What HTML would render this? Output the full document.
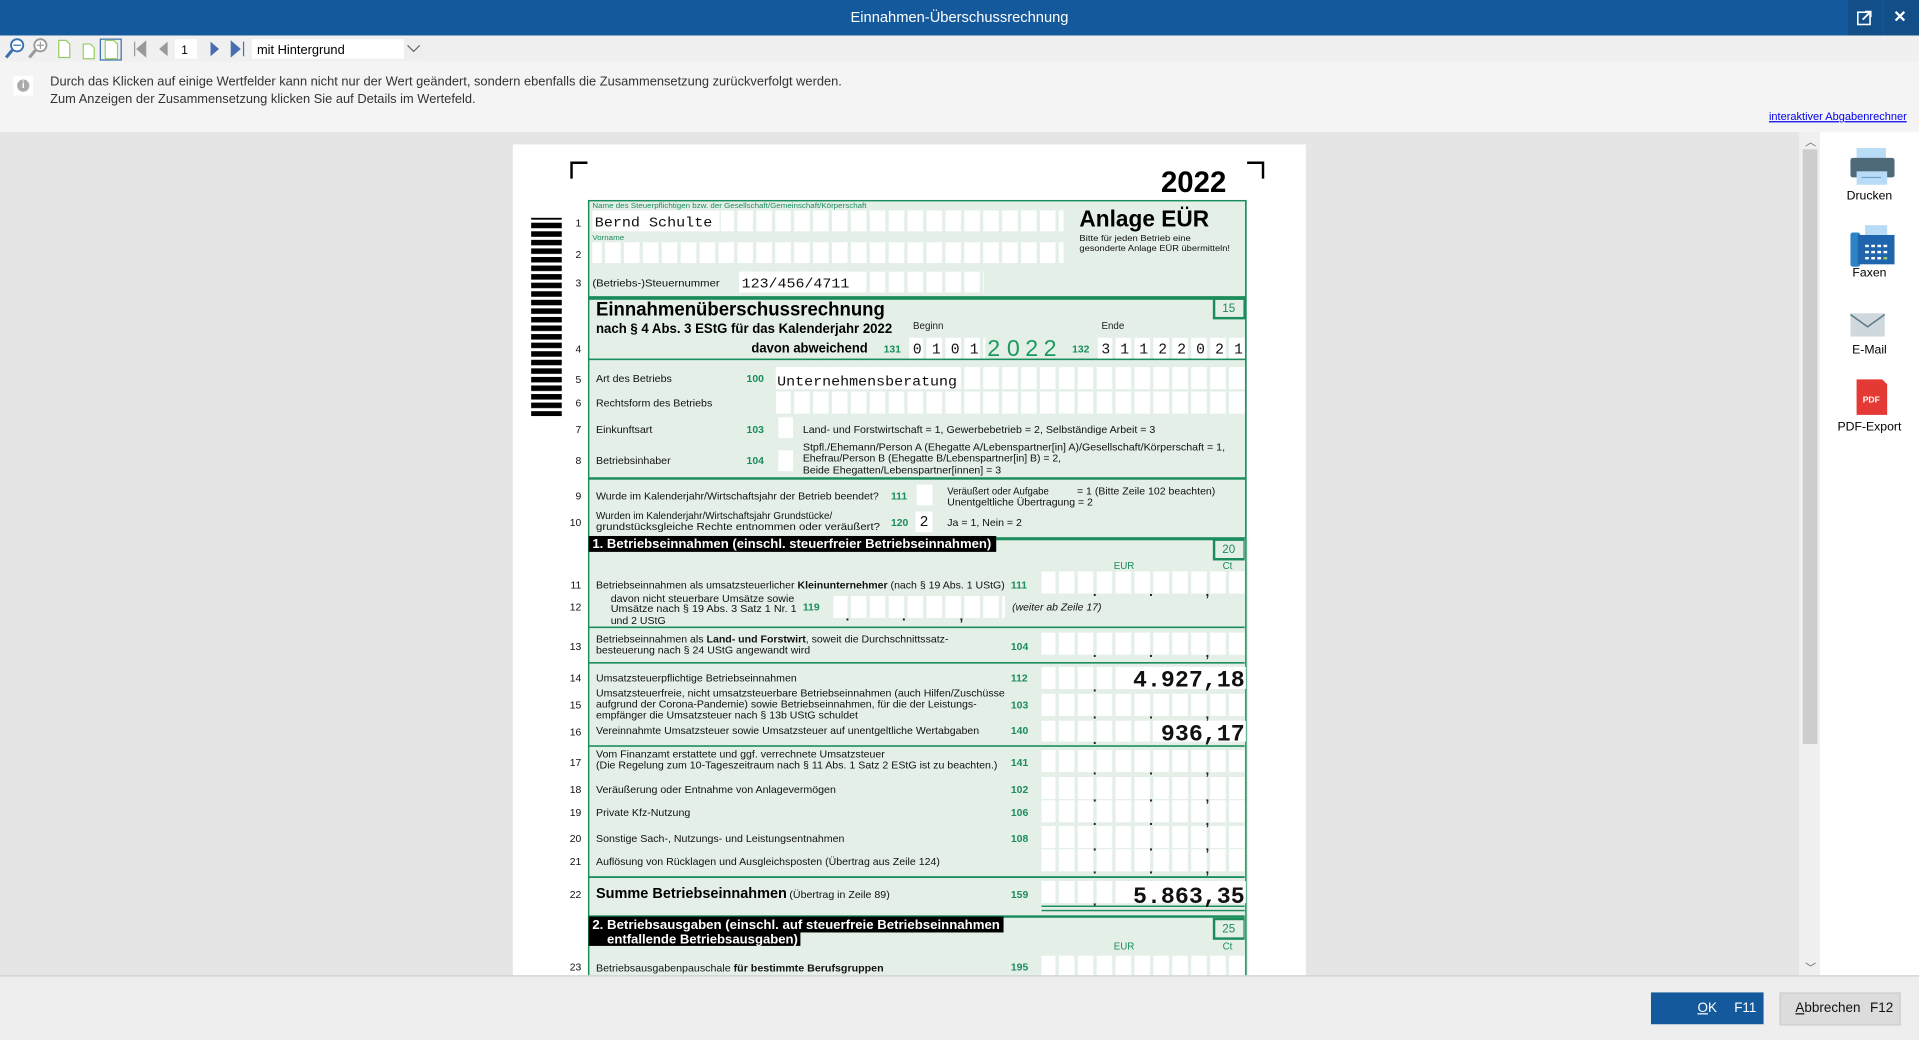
<!DOCTYPE html>
<html><head><meta charset="utf-8"><style>
html,body{margin:0;padding:0;width:1919px;height:1040px;overflow:hidden;background:#eee}
#w{position:absolute;left:0;top:0;width:1568px;height:850px;transform:scale(1.22385,1.2237);transform-origin:0 0;font-family:"Liberation Sans",sans-serif;overflow:hidden;background:#e5e5e5}
.a{position:absolute}
</style></head><body><div id="w">
<div class="a" style="left:0;top:0;width:1568px;height:29px;background:#14599b;color:#fff;font-size:12px;text-align:center;line-height:29px">Einnahmen-Überschussrechnung</div>
<div class="a" style="left:1510px;top:0;width:28px;height:29px;background:#124f89"></div>
<div class="a" style="left:1539px;top:0;width:29px;height:29px;background:#124f89"></div>
<svg class="a" style="left:1517px;top:8px" width="13" height="13"><rect x="1" y="2" width="10" height="10" fill="none" stroke="#fff" stroke-width="1.3"/><path d="M5 8 L11 2 M7 1.5 H11.5 V6" stroke="#fff" stroke-width="1.5" fill="none"/></svg>
<div class="a" style="left:1547px;top:6px;color:#fff;font-size:13px;font-weight:bold">✕</div>
<div class="a" style="left:0;top:29px;width:1568px;height:21px;background:#f0f0f0"></div>
<svg class="a" style="left:0;top:29px" width="350" height="21">
<circle cx="14" cy="8" r="5" fill="#fff" stroke="#3a6fb0" stroke-width="1.5"/><path d="M11 8h6" stroke="#3a6fb0"/><path d="M10 12 L5 18" stroke="#3a6fb0" stroke-width="2.5"/>
<circle cx="33" cy="8" r="5" fill="#fff" stroke="#999" stroke-width="1.5"/><path d="M30 8h6M33 5v6" stroke="#999"/><path d="M29 12 L24 18" stroke="#999" stroke-width="2.5"/>
<path d="M48 4h6l3 3v11h-9z" fill="#fff" stroke="#9c6"/><path d="M68 7h6l3 3v9h-9z" fill="#fff" stroke="#9c6"/>
<rect x="82" y="3" width="17" height="17" fill="none" stroke="#3a6fb0"/><path d="M86 4h7l3 3v12h-10z" fill="#fff" stroke="#9c6"/>
<path d="M110 5v12M119 5l-7 6 7 6z" stroke="#999" fill="#999"/><path d="M137 5l-7 6 7 6z" fill="#999"/>
<rect x="143" y="3" width="18" height="16" fill="#fff"/><text x="148" y="15" font-size="10" font-family="Liberation Sans">1</text>
<path d="M172 5l7 6-7 6z" fill="#4a6fb0"/><path d="M189 5l7 6-7 6z M199 5v12" fill="#4a6fb0" stroke="#4a6fb0"/>
<rect x="206" y="3" width="140" height="16" fill="#fff"/><rect x="330" y="3" width="16" height="16" fill="#eee"/><path d="M333 8l5 5 5-5" stroke="#666" fill="none"/>
<text x="210" y="15" font-size="10.5" font-family="Liberation Sans">mit Hintergrund</text></svg>
<div class="a" style="left:0;top:50px;width:1568px;height:58px;background:#f4f4f4"></div>
<div class="a" style="left:11px;top:62px;width:16px;height:16px;background:#fff"></div>
<div class="a" style="left:14px;top:65px;width:10px;height:10px;border-radius:5px;background:#aaa;color:#fff;font-size:8px;text-align:center;line-height:10px;font-weight:bold">i</div>
<div class="a" style="left:41px;top:60px;font-size:10.5px;color:#333;line-height:14px">Durch das Klicken auf einige Wertfelder kann nicht nur der Wert geändert, sondern ebenfalls die Zusammensetzung zurückverfolgt werden.<br>Zum Anzeigen der Zusammensetzung klicken Sie auf Details im Wertefeld.</div>
<div class="a" style="right:10px;top:90px;font-size:9px;color:#00e;text-decoration:underline">interaktiver Abgabenrechner</div>
<div class="a" style="left:1470px;top:108px;width:17px;height:690px;background:#f0f0f0"></div>
<div class="a" style="left:1473px;top:122px;width:12px;height:486px;background:#cdcdcd"></div>
<div class="a" style="left:1475px;top:109px;font-size:9px;color:#666">︿</div>
<div class="a" style="left:1475px;top:784px;font-size:9px;color:#666">﹀</div>
<div class="a" style="left:1487px;top:108px;width:81px;height:690px;background:#fff;font-size:10px;text-align:center"></div>
<svg class="a" style="left:1487px;top:108px" width="81" height="260">
<rect x="30" y="13" width="24" height="10" fill="#b8dcf5"/><rect x="25" y="21" width="36" height="16" rx="2" fill="#4e6978"/><rect x="30" y="32" width="25" height="11" fill="#b8dcf5"/><path d="M34 37h16" stroke="#6aa0cc"/>
<rect x="25" y="82" width="8" height="28" rx="2" fill="#2c84c6"/><rect x="31" y="84" width="30" height="24" fill="#1f65ad"/><rect x="37" y="76" width="18" height="8" fill="#b8dcf5"/>
<g fill="#fff"><rect x="37" y="92" width="3" height="2"/><rect x="42" y="92" width="3" height="2"/><rect x="47" y="92" width="3" height="2"/><rect x="52" y="92" width="3" height="2"/><rect x="37" y="97" width="3" height="2"/><rect x="42" y="97" width="3" height="2"/><rect x="47" y="97" width="3" height="2"/><rect x="52" y="97" width="3" height="2"/><rect x="37" y="102" width="3" height="2"/><rect x="42" y="102" width="3" height="2"/><rect x="47" y="102" width="3" height="2"/><rect x="52" y="102" width="3" height="2" fill="#9c6"/></g>
<rect x="25" y="148" width="28" height="19" fill="#cfd8dc"/><path d="M25 149 L39 159 L53 149" stroke="#607d8b" stroke-width="1.3" fill="none"/>
<path d="M30 202h21l4 4v25h-25z" fill="#e53935"/><text x="42" y="221" font-size="7" font-weight="bold" fill="#fff" text-anchor="middle" font-family="Liberation Sans">PDF</text>
</svg>
<div class="a" style="left:1487px;top:155px;width:81px;text-align:center;font-size:10px">Drucken</div>
<div class="a" style="left:1487px;top:218px;width:81px;text-align:center;font-size:10px">Faxen</div>
<div class="a" style="left:1487px;top:281px;width:81px;text-align:center;font-size:10px">E-Mail</div>
<div class="a" style="left:1487px;top:344px;width:81px;text-align:center;font-size:10px">PDF-Export</div>
<div class="a" style="left:419px;top:118px;width:648px;height:690px;background:#fff"></div>
<svg class="a" style="left:0;top:0" width="1568" height="850" font-family="Liberation Sans, sans-serif">
<defs>
<pattern id="c" patternUnits="userSpaceOnUse" width="15.45" height="100"><rect width="12.7" height="100" fill="#fff"/></pattern>
<pattern id="bc" patternUnits="userSpaceOnUse" width="26" height="7"><rect width="26" height="4.5" fill="#000"/></pattern>
</defs>
<path d="M467 146V133H480 M1019 133H1032V146" stroke="#000" stroke-width="2" fill="none"/>
<text x="1002" y="157" font-size="24" font-weight="bold" text-anchor="end">2022</text>
<rect x="434" y="178" width="25" height="162" fill="url(#bc)"/>
<rect x="481" y="164" width="537" height="640" fill="#e4efe8" stroke="#1b8c5c" stroke-width="1.2"/>
<g fill="#1b8c5c"><rect x="481" y="242" width="537" height="3"/><rect x="481" y="293" width="537" height="1.3"/><rect x="481" y="390" width="537" height="2"/><rect x="481" y="439" width="537" height="2.5"/><rect x="481" y="512" width="537" height="1.3"/><rect x="481" y="541" width="537" height="1.3"/><rect x="481" y="609" width="537" height="1.3"/><rect x="481" y="716" width="537" height="1.5"/><rect x="481" y="748" width="537" height="2"/><rect x="851" y="740" width="167" height="1.2"/><rect x="851" y="743.5" width="167" height="1.2"/></g>
<g fill="none" stroke="#1b8c5c" stroke-width="2"><rect x="992" y="244" width="25" height="16"/><rect x="992" y="441" width="25" height="16"/><rect x="992" y="751" width="25" height="16"/></g>
<g fill="#1b8c5c" font-size="9.5" text-anchor="middle"><text x="1004" y="255">15</text><text x="1004" y="452">20</text><text x="1004" y="762">25</text></g>
<rect x="484" y="172" width="104" height="17" fill="#fff"/><rect x="589" y="172" width="280" height="17" fill="url(#c)"/>
<rect x="484" y="198" width="385" height="17" fill="url(#c)"/><rect x="604" y="222" width="200" height="17" fill="url(#c)"/><rect x="604" y="222" width="93" height="17" fill="#fff"/>
<rect x="743" y="276" width="62" height="17" fill="url(#c)"/><rect x="897" y="276" width="124" height="17" fill="url(#c)"/>
<rect x="634" y="300" width="385" height="18" fill="url(#c)"/><rect x="634" y="300" width="150" height="18" fill="#fff"/><rect x="634" y="320" width="385" height="18" fill="url(#c)"/>
<g fill="#fff"><rect x="636" y="341" width="12" height="17"/><rect x="636" y="368" width="12" height="17"/><rect x="749" y="396" width="13" height="17"/><rect x="748" y="418" width="14" height="17"/></g>
<rect x="681" y="487" width="140" height="18" fill="url(#c)"/>
<g fill="url(#c)"><rect x="851" y="467" width="170" height="18"/><rect x="851" y="517" width="170" height="18"/><rect x="851" y="545" width="170" height="18"/><rect x="851" y="567" width="170" height="18"/><rect x="851" y="589" width="170" height="17"/><rect x="851" y="613" width="170" height="18"/><rect x="851" y="635" width="170" height="18"/><rect x="851" y="654" width="170" height="18"/><rect x="851" y="675" width="170" height="18"/><rect x="851" y="694" width="170" height="18"/><rect x="851" y="720" width="170" height="18"/><rect x="851" y="781" width="170" height="18"/></g>
<rect x="1017" y="440" width="3" height="370" fill="#e4efe8"/><rect x="1017.4" y="164" width="1.2" height="640" fill="#1b8c5c"/>
<rect x="912" y="545" width="106" height="18" fill="#fff"/><rect x="942" y="589" width="76" height="17" fill="#fff"/><rect x="912" y="720" width="106" height="18" fill="#fff"/>
<g font-size="11" fill="#222" font-weight="bold"><text x="893" y="487">.</text><text x="939" y="487">.</text><text x="985" y="487">,</text><text x="893" y="537">.</text><text x="939" y="537">.</text><text x="985" y="537">,</text><text x="893" y="565">.</text><text x="893" y="587">.</text><text x="939" y="587">.</text><text x="985" y="587">,</text><text x="893" y="608">.</text><text x="893" y="633">.</text><text x="939" y="633">.</text><text x="985" y="633">,</text><text x="893" y="655">.</text><text x="939" y="655">.</text><text x="985" y="655">,</text><text x="893" y="674">.</text><text x="939" y="674">.</text><text x="985" y="674">,</text><text x="893" y="695">.</text><text x="939" y="695">.</text><text x="985" y="695">,</text><text x="893" y="714">.</text><text x="939" y="714">.</text><text x="985" y="714">,</text><text x="893" y="740">.</text><text x="893" y="800">.</text><text x="939" y="800">.</text><text x="691" y="507">.</text><text x="737" y="507">.</text><text x="784" y="507">,</text></g>
<g font-size="8.5" fill="#111" text-anchor="end"><text x="475" y="185">1</text><text x="475" y="211">2</text><text x="475" y="234">3</text><text x="475" y="288">4</text><text x="475" y="313">5</text><text x="475" y="332">6</text><text x="475" y="354">7</text><text x="475" y="379">8</text><text x="475" y="408">9</text><text x="475" y="430">10</text><text x="475" y="481">11</text><text x="475" y="499">12</text><text x="475" y="531">13</text><text x="475" y="557">14</text><text x="475" y="579">15</text><text x="475" y="601">16</text><text x="475" y="626">17</text><text x="475" y="648">18</text><text x="475" y="667">19</text><text x="475" y="688">20</text><text x="475" y="707">21</text><text x="475" y="734">22</text><text x="475" y="793">23</text></g>
<g fill="#1b8c5c" font-size="6"><text x="484" y="170" textLength="224" lengthAdjust="spacingAndGlyphs">Name des Steuerpflichtigen bzw. der Gesellschaft/Gemeinschaft/Körperschaft</text><text x="484" y="196" textLength="26" lengthAdjust="spacingAndGlyphs">Vorname</text></g>
<g font-family="Liberation Mono, monospace" font-size="11.5" fill="#111"><text x="486" y="185" textLength="96" lengthAdjust="spacingAndGlyphs">Bernd Schulte</text><text x="606" y="235" textLength="88" lengthAdjust="spacingAndGlyphs">123/456/4711</text><text x="635" y="315" textLength="147" lengthAdjust="spacingAndGlyphs">Unternehmensberatung</text></g>
<g font-family="Liberation Mono, monospace" font-size="12" fill="#111" text-anchor="middle"><text x="749.5" y="289">0</text><text x="765" y="289">1</text><text x="780.5" y="289">0</text><text x="796" y="289">1</text><text x="903.5" y="289">3</text><text x="919" y="289">1</text><text x="934.5" y="289">1</text><text x="950" y="289">2</text><text x="965.5" y="289">2</text><text x="981" y="289">0</text><text x="996.5" y="289">2</text><text x="1012" y="289">1</text><text x="755" y="430">2</text></g>
<g font-size="19" fill="#1b9a5c" text-anchor="middle"><text x="812" y="291">2</text><text x="828" y="291">0</text><text x="843" y="291">2</text><text x="858" y="291">2</text></g>
<g font-family="Liberation Mono, monospace" font-size="19" font-weight="bold" fill="#111" text-anchor="end"><text x="1017" y="561">4.927,18</text><text x="1017" y="605">936,17</text><text x="1017" y="738">5.863,35</text></g>
<text x="882" y="185" font-size="19" font-weight="bold" textLength="106" lengthAdjust="spacingAndGlyphs">Anlage EÜR</text>
<g font-size="7" fill="#111"><text x="882" y="197" textLength="91" lengthAdjust="spacingAndGlyphs">Bitte für jeden Betrieb eine</text><text x="882" y="205" textLength="123" lengthAdjust="spacingAndGlyphs">gesonderte Anlage EÜR übermitteln!</text></g>
<text x="487" y="258" font-size="16" font-weight="bold" textLength="236" lengthAdjust="spacingAndGlyphs">Einnahmenüberschussrechnung</text>
<text x="487" y="272" font-size="11" font-weight="bold" textLength="242" lengthAdjust="spacingAndGlyphs">nach § 4 Abs. 3 EStG für das Kalenderjahr 2022</text>
<text x="614" y="288" font-size="11" font-weight="bold" textLength="95" lengthAdjust="spacingAndGlyphs">davon abweichend</text>
<g font-size="8" fill="#222"><text x="746" y="269">Beginn</text><text x="900" y="269">Ende</text></g>
<g fill="#1b8c5c" font-size="8.5" font-weight="bold"><text x="722" y="288">131</text><text x="876" y="288">132</text><text x="610" y="312">100</text><text x="610" y="354">103</text><text x="610" y="379">104</text><text x="728" y="408">111</text><text x="728" y="430">120</text><text x="826" y="481">111</text><text x="656" y="499">119</text><text x="826" y="531">104</text><text x="826" y="557">112</text><text x="826" y="579">103</text><text x="826" y="600">140</text><text x="826" y="626">141</text><text x="826" y="648">102</text><text x="826" y="667">106</text><text x="826" y="688">108</text><text x="826" y="734">159</text><text x="826" y="793">195</text></g>
<g fill="#1b8c5c" font-size="8"><text x="910" y="465">EUR</text><text x="999" y="465">Ct</text><text x="910" y="776">EUR</text><text x="999" y="776">Ct</text></g>
<g font-size="8.6" fill="#111">
<text x="484" y="234" textLength="104" lengthAdjust="spacingAndGlyphs">(Betriebs-)Steuernummer</text>
<text x="487" y="312" textLength="62" lengthAdjust="spacingAndGlyphs">Art des Betriebs</text>
<text x="487" y="332" textLength="95" lengthAdjust="spacingAndGlyphs">Rechtsform des Betriebs</text>
<text x="487" y="354" textLength="46" lengthAdjust="spacingAndGlyphs">Einkunftsart</text>
<text x="656" y="354" textLength="288" lengthAdjust="spacingAndGlyphs">Land- und Forstwirtschaft = 1, Gewerbebetrieb = 2, Selbständige Arbeit = 3</text>
<text x="487" y="379" textLength="61" lengthAdjust="spacingAndGlyphs">Betriebsinhaber</text>
<text x="656" y="368" textLength="345" lengthAdjust="spacingAndGlyphs">Stpfl./Ehemann/Person A (Ehegatte A/Lebenspartner[in] A)/Gesellschaft/Körperschaft = 1,</text>
<text x="656" y="377" textLength="211" lengthAdjust="spacingAndGlyphs">Ehefrau/Person B (Ehegatte B/Lebenspartner[in] B) = 2,</text>
<text x="656" y="387" textLength="162" lengthAdjust="spacingAndGlyphs">Beide Ehegatten/Lebenspartner[innen] = 3</text>
<text x="487" y="408" textLength="231" lengthAdjust="spacingAndGlyphs">Wurde im Kalenderjahr/Wirtschaftsjahr der Betrieb beendet?</text>
<text x="774" y="404" textLength="83" lengthAdjust="spacingAndGlyphs">Veräußert oder Aufgabe</text>
<text x="880" y="404" textLength="113" lengthAdjust="spacingAndGlyphs">= 1 (Bitte Zeile 102 beachten)</text>
<text x="774" y="413" textLength="119" lengthAdjust="spacingAndGlyphs">Unentgeltliche Übertragung = 2</text>
<text x="487" y="424" textLength="193" lengthAdjust="spacingAndGlyphs">Wurden im Kalenderjahr/Wirtschaftsjahr Grundstücke/</text>
<text x="487" y="433" textLength="232" lengthAdjust="spacingAndGlyphs">grundstücksgleiche Rechte entnommen oder veräußert?</text>
<text x="774" y="430" textLength="61" lengthAdjust="spacingAndGlyphs">Ja = 1, Nein = 2</text>
<text x="487" y="481" textLength="334" lengthAdjust="spacingAndGlyphs">Betriebseinnahmen als umsatzsteuerlicher <tspan font-weight="bold">Kleinunternehmer</tspan> (nach § 19 Abs. 1 UStG)</text>
<text x="499" y="492" textLength="150" lengthAdjust="spacingAndGlyphs">davon nicht steuerbare Umsätze sowie</text>
<text x="499" y="500" textLength="152" lengthAdjust="spacingAndGlyphs">Umsätze nach § 19 Abs. 3 Satz 1 Nr. 1</text>
<text x="499" y="510">und 2 UStG</text>
<text x="827" y="499" font-style="italic" textLength="73" lengthAdjust="spacingAndGlyphs">(weiter ab Zeile 17)</text>
<text x="487" y="525" textLength="288" lengthAdjust="spacingAndGlyphs">Betriebseinnahmen als <tspan font-weight="bold">Land- und Forstwirt</tspan>, soweit die Durchschnittssatz-</text>
<text x="487" y="534" textLength="175" lengthAdjust="spacingAndGlyphs">besteuerung nach § 24 UStG angewandt wird</text>
<text x="487" y="557" textLength="164" lengthAdjust="spacingAndGlyphs">Umsatzsteuerpflichtige Betriebseinnahmen</text>
<text x="487" y="569" textLength="334" lengthAdjust="spacingAndGlyphs">Umsatzsteuerfreie, nicht umsatzsteuerbare Betriebseinnahmen (auch Hilfen/Zuschüsse</text>
<text x="487" y="578" textLength="311" lengthAdjust="spacingAndGlyphs">aufgrund der Corona-Pandemie) sowie Betriebseinnahmen, für die der Leistungs-</text>
<text x="487" y="587" textLength="214" lengthAdjust="spacingAndGlyphs">empfänger die Umsatzsteuer nach § 13b UStG schuldet</text>
<text x="487" y="600" textLength="313" lengthAdjust="spacingAndGlyphs">Vereinnahmte Umsatzsteuer sowie Umsatzsteuer auf unentgeltliche Wertabgaben</text>
<text x="487" y="619" textLength="236" lengthAdjust="spacingAndGlyphs">Vom Finanzamt erstattete und ggf. verrechnete Umsatzsteuer</text>
<text x="487" y="628" textLength="328" lengthAdjust="spacingAndGlyphs">(Die Regelung zum 10-Tageszeitraum nach § 11 Abs. 1 Satz 2 EStG ist zu beachten.)</text>
<text x="487" y="648" textLength="196" lengthAdjust="spacingAndGlyphs">Veräußerung oder Entnahme von Anlagevermögen</text>
<text x="487" y="667" textLength="77" lengthAdjust="spacingAndGlyphs">Private Kfz-Nutzung</text>
<text x="487" y="688" textLength="203" lengthAdjust="spacingAndGlyphs">Sonstige Sach-, Nutzungs- und Leistungsentnahmen</text>
<text x="487" y="707" textLength="281" lengthAdjust="spacingAndGlyphs">Auflösung von Rücklagen und Ausgleichsposten (Übertrag aus Zeile 124)</text>
<text x="645" y="734" textLength="82" lengthAdjust="spacingAndGlyphs">(Übertrag in Zeile 89)</text>
<text x="487" y="794" textLength="235" lengthAdjust="spacingAndGlyphs">Betriebsausgabenpauschale <tspan font-weight="bold">für bestimmte Berufsgruppen</tspan></text>
</g>
<text x="487" y="734" font-size="12" font-weight="bold" textLength="156" lengthAdjust="spacingAndGlyphs">Summe Betriebseinnahmen</text>
<rect x="481" y="438" width="333" height="13" fill="#000"/>
<text x="484" y="448" font-size="10.5" font-weight="bold" fill="#fff" textLength="326" lengthAdjust="spacingAndGlyphs">1. Betriebseinnahmen (einschl. steuerfreier Betriebseinnahmen)</text>
<rect x="481" y="749" width="339" height="13" fill="#000"/><rect x="481" y="761" width="173" height="12" fill="#000"/>
<text x="484" y="759" font-size="10.5" font-weight="bold" fill="#fff" textLength="333" lengthAdjust="spacingAndGlyphs">2. Betriebsausgaben (einschl. auf steuerfreie Betriebseinnahmen</text>
<text x="496" y="771" font-size="10.5" font-weight="bold" fill="#fff" textLength="156" lengthAdjust="spacingAndGlyphs">entfallende Betriebsausgaben)</text>
</svg>
<div class="a" style="left:0;top:797px;width:1568px;height:53px;background:#eeeeee;border-top:1px solid #cfcfcf"></div>
<div class="a" style="left:1349px;top:811px;width:92px;height:26px;background:#14599b;color:#fff;font-size:11px;line-height:26px"><span style="position:absolute;left:38px"><u>O</u>K</span><span style="position:absolute;left:68px">F11</span></div>
<div class="a" style="left:1454px;top:811px;width:97px;height:25px;background:#dcdcdc;border:1px solid #ccc;color:#111;font-size:11px;line-height:25px"><span style="position:absolute;left:12px"><u>A</u>bbrechen</span><span style="position:absolute;left:73px">F12</span></div>
</div></body></html>
